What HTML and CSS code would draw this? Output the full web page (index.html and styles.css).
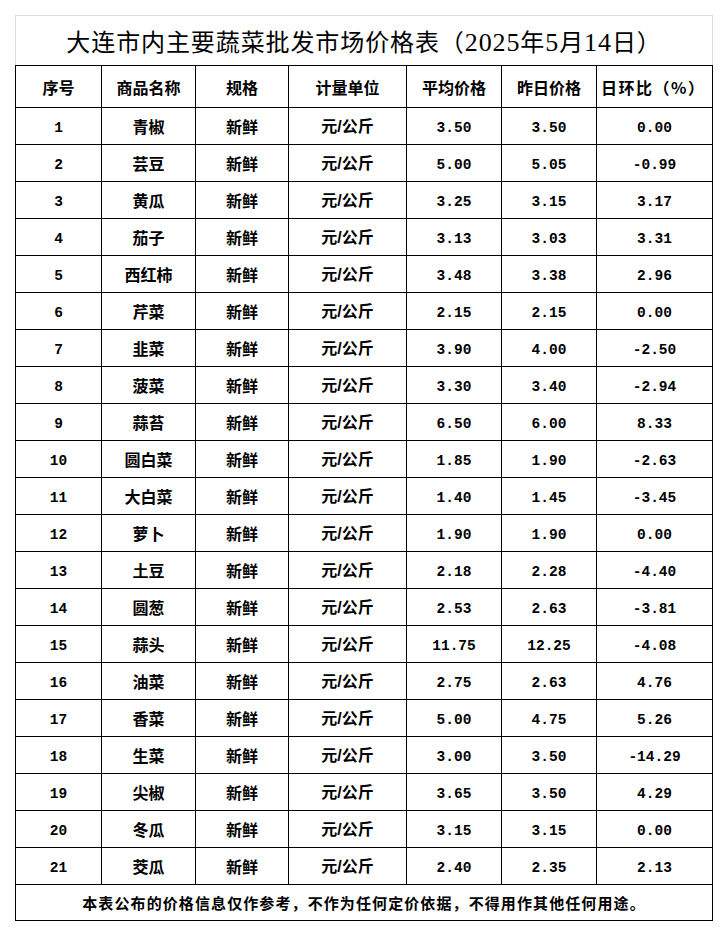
FILE: index.html
```html
<!DOCTYPE html>
<html lang="zh-CN">
<head>
<meta charset="utf-8">
<title>大连市内主要蔬菜批发市场价格表</title>
<link rel="stylesheet" href="styles.css">
</head>
<body>
<div class="sheet">
<table class="price-table">
<colgroup>
<col class="c1"><col class="c2"><col class="c3"><col class="c4"><col class="c5"><col class="c6"><col class="c7">
</colgroup>
<thead>
<tr class="title-row"><th colspan="7" class="title">大连市内主要蔬菜批发市场价格表（<span class="tnum">2025</span>年<span class="tnum">5</span>月<span class="tnum">14</span>日）</th></tr>
<tr class="head-row"><th>序号</th><th>商品名称</th><th>规格</th><th>计量单位</th><th>平均价格</th><th>昨日价格</th><th class="left">日环比（%）</th></tr>
</thead>
<tbody>
<tr><td class="num">1</td><td>青椒</td><td>新鲜</td><td>元<span class="sl">/</span>公斤</td><td class="num">3.50</td><td class="num">3.50</td><td class="num">0.00</td></tr>
<tr><td class="num">2</td><td>芸豆</td><td>新鲜</td><td>元<span class="sl">/</span>公斤</td><td class="num">5.00</td><td class="num">5.05</td><td class="num">-0.99</td></tr>
<tr><td class="num">3</td><td>黄瓜</td><td>新鲜</td><td>元<span class="sl">/</span>公斤</td><td class="num">3.25</td><td class="num">3.15</td><td class="num">3.17</td></tr>
<tr><td class="num">4</td><td>茄子</td><td>新鲜</td><td>元<span class="sl">/</span>公斤</td><td class="num">3.13</td><td class="num">3.03</td><td class="num">3.31</td></tr>
<tr><td class="num">5</td><td>西红柿</td><td>新鲜</td><td>元<span class="sl">/</span>公斤</td><td class="num">3.48</td><td class="num">3.38</td><td class="num">2.96</td></tr>
<tr><td class="num">6</td><td>芹菜</td><td>新鲜</td><td>元<span class="sl">/</span>公斤</td><td class="num">2.15</td><td class="num">2.15</td><td class="num">0.00</td></tr>
<tr><td class="num">7</td><td>韭菜</td><td>新鲜</td><td>元<span class="sl">/</span>公斤</td><td class="num">3.90</td><td class="num">4.00</td><td class="num">-2.50</td></tr>
<tr><td class="num">8</td><td>菠菜</td><td>新鲜</td><td>元<span class="sl">/</span>公斤</td><td class="num">3.30</td><td class="num">3.40</td><td class="num">-2.94</td></tr>
<tr><td class="num">9</td><td>蒜苔</td><td>新鲜</td><td>元<span class="sl">/</span>公斤</td><td class="num">6.50</td><td class="num">6.00</td><td class="num">8.33</td></tr>
<tr><td class="num">10</td><td>圆白菜</td><td>新鲜</td><td>元<span class="sl">/</span>公斤</td><td class="num">1.85</td><td class="num">1.90</td><td class="num">-2.63</td></tr>
<tr><td class="num">11</td><td>大白菜</td><td>新鲜</td><td>元<span class="sl">/</span>公斤</td><td class="num">1.40</td><td class="num">1.45</td><td class="num">-3.45</td></tr>
<tr><td class="num">12</td><td>萝卜</td><td>新鲜</td><td>元<span class="sl">/</span>公斤</td><td class="num">1.90</td><td class="num">1.90</td><td class="num">0.00</td></tr>
<tr><td class="num">13</td><td>土豆</td><td>新鲜</td><td>元<span class="sl">/</span>公斤</td><td class="num">2.18</td><td class="num">2.28</td><td class="num">-4.40</td></tr>
<tr><td class="num">14</td><td>圆葱</td><td>新鲜</td><td>元<span class="sl">/</span>公斤</td><td class="num">2.53</td><td class="num">2.63</td><td class="num">-3.81</td></tr>
<tr><td class="num">15</td><td>蒜头</td><td>新鲜</td><td>元<span class="sl">/</span>公斤</td><td class="num">11.75</td><td class="num">12.25</td><td class="num">-4.08</td></tr>
<tr><td class="num">16</td><td>油菜</td><td>新鲜</td><td>元<span class="sl">/</span>公斤</td><td class="num">2.75</td><td class="num">2.63</td><td class="num">4.76</td></tr>
<tr><td class="num">17</td><td>香菜</td><td>新鲜</td><td>元<span class="sl">/</span>公斤</td><td class="num">5.00</td><td class="num">4.75</td><td class="num">5.26</td></tr>
<tr><td class="num">18</td><td>生菜</td><td>新鲜</td><td>元<span class="sl">/</span>公斤</td><td class="num">3.00</td><td class="num">3.50</td><td class="num">-14.29</td></tr>
<tr><td class="num">19</td><td>尖椒</td><td>新鲜</td><td>元<span class="sl">/</span>公斤</td><td class="num">3.65</td><td class="num">3.50</td><td class="num">4.29</td></tr>
<tr><td class="num">20</td><td>冬瓜</td><td>新鲜</td><td>元<span class="sl">/</span>公斤</td><td class="num">3.15</td><td class="num">3.15</td><td class="num">0.00</td></tr>
<tr><td class="num">21</td><td>茭瓜</td><td>新鲜</td><td>元<span class="sl">/</span>公斤</td><td class="num">2.40</td><td class="num">2.35</td><td class="num">2.13</td></tr>
</tbody>
<tfoot>
<tr class="foot-row"><td colspan="7">本表公布的价格信息仅作参考，不作为任何定价依据，不得用作其他任何用途。</td></tr>
</tfoot>
</table>
</div>
</body>
</html>
```
FILE: styles.css
```css
html, body {
  margin: 0;
  padding: 0;
  background: #ffffff;
}

.sheet {
  padding: 15px 0 0 15px;
}

.price-table {
  border-collapse: collapse;
  table-layout: fixed;
  width: 697px;
  font-family: "Noto Sans CJK SC", sans-serif;
  color: #000;
}

.c1 { width: 86px; }
.c2 { width: 94px; }
.c3 { width: 93px; }
.c4 { width: 118px; }
.c5 { width: 95px; }
.c6 { width: 95px; }
.c7 { width: 116px; }

.price-table th,
.price-table td {
  border: 1px solid #000;
  padding: 0;
  text-align: center;
  vertical-align: middle;
  font-size: 16px;
  font-weight: bold;
  line-height: 20px;
  white-space: nowrap;
  overflow: hidden;
}

.title-row th.title {
  height: 47px;
  border: 1px solid #dcdcdc;
  border-bottom: 1px solid #000;
  font-family: "Noto Sans CJK SC", serif;
  font-weight: normal;
  font-size: 24px;
  line-height: 28px;
  letter-spacing: 0.9px;
  padding-top: 2px;
}

.title .tnum {
  font-family: "Liberation Serif", serif;
  font-size: 26px;
}

.head-row th {
  height: 41px;
}

.head-row th.left {
  text-align: left;
  padding-left: 4px;
  letter-spacing: 1.5px;
}

.price-table tbody td {
  height: 36px;
}

.price-table td.num {
  font-family: "Liberation Mono", monospace;
  font-size: 14.5px;
  line-height: 18px;
  padding-top: 3px;
  height: 33px;
}

.sl {
  font-family: "Liberation Sans", sans-serif;
}

.foot-row td {
  height: 35px;
  font-size: 15px;
  letter-spacing: 1.1px;
}
```
